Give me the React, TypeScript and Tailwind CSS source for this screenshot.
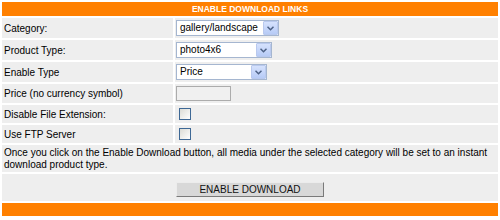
import React from 'react'

function FakeSelect({ value, width }: { value: string; width: string }) {
  return (
    <div className={`${width} h-[16px] flex items-center border border-[#a5b6d0] bg-white`}>
      <span className="flex-1 pl-[3px] leading-[14px] whitespace-nowrap overflow-hidden">{value}</span>
      <span className="w-[15px] h-[14px] flex items-center justify-center bg-gradient-to-b from-[#d6e2fd] to-[#b7cbf6] border border-[#b9c9ee] rounded-[1px]">
        <svg width="7" height="5" viewBox="0 0 7 5">
          <path d="M0.5 0.8 L3.5 3.8 L6.5 0.8" fill="none" stroke="#4d6185" strokeWidth="1.5" />
        </svg>
      </span>
    </div>
  )
}

function CheckBox() {
  return (
    <div className="w-[12px] h-[12px] border border-[#3e6895] bg-gradient-to-br from-[#dcdcd6] to-[#ffffff]" />
  )
}

function Row({ label, h, children }: { label: string; h: string; children: React.ReactNode }) {
  return (
    <div className={`grid grid-cols-[171px_1fr] gap-x-[2px] ${h}`}>
      <div className="bg-[#eeeeee] flex items-center pl-[2px]">{label}</div>
      <div className="bg-[#eeeeee] flex items-center pl-[1px]">{children}</div>
    </div>
  )
}

export default function App() {
  return (
    <div className="w-[500px] h-[220px] bg-white pt-[2px] px-[2px] text-[10px] text-black font-['Liberation_Sans',Arial,sans-serif]">
      <div className="flex flex-col gap-[2px]">
        {/* header */}
        <div className="h-[14px] bg-[#ff8000] flex items-center justify-center text-white font-bold text-[8.5px]">
          ENABLE DOWNLOAD LINKS
        </div>

        <Row label="Category:" h="h-[20px]">
          <FakeSelect value="gallery/landscape" width="w-[103px]" />
        </Row>
        <Row label="Product Type:" h="h-[20px]">
          <FakeSelect value="photo4x6" width="w-[96px]" />
        </Row>
        <Row label="Enable Type" h="h-[20px]">
          <FakeSelect value="Price" width="w-[91px]" />
        </Row>
        <Row label="Price (no currency symbol)" h="h-[19px]">
          <div className="w-[55px] h-[15px] border border-[#acacac] bg-[#f0f0f0]" />
        </Row>
        <Row label="Disable File Extension:" h="h-[18px]">
          <div className="pl-[3px]"><CheckBox /></div>
        </Row>
        <Row label="Use FTP Server" h="h-[18px]">
          <div className="pl-[3px]"><CheckBox /></div>
        </Row>

        {/* description */}
        <div className="h-[27px] bg-[#eeeeee] px-[2px] pt-[2px] leading-[12px]">
          Once you click on the Enable Download button, all media under the selected category will be set to an instant download product type.
        </div>

        {/* button */}
        <div className="h-[27px] bg-[#eeeeee] flex justify-center pt-[8px]">
          <button className="w-[148px] h-[15px] bg-[#d8d8d8] border-t border-l border-[#ececec] border-r border-b border-r-[#7a7a7a] border-b-[#7a7a7a] text-[10px] leading-[13px] text-[#111]">
            ENABLE DOWNLOAD
          </button>
        </div>

        {/* footer */}
        <div className="h-[13px] bg-[#ff8000]" />
      </div>
    </div>
  )
}
